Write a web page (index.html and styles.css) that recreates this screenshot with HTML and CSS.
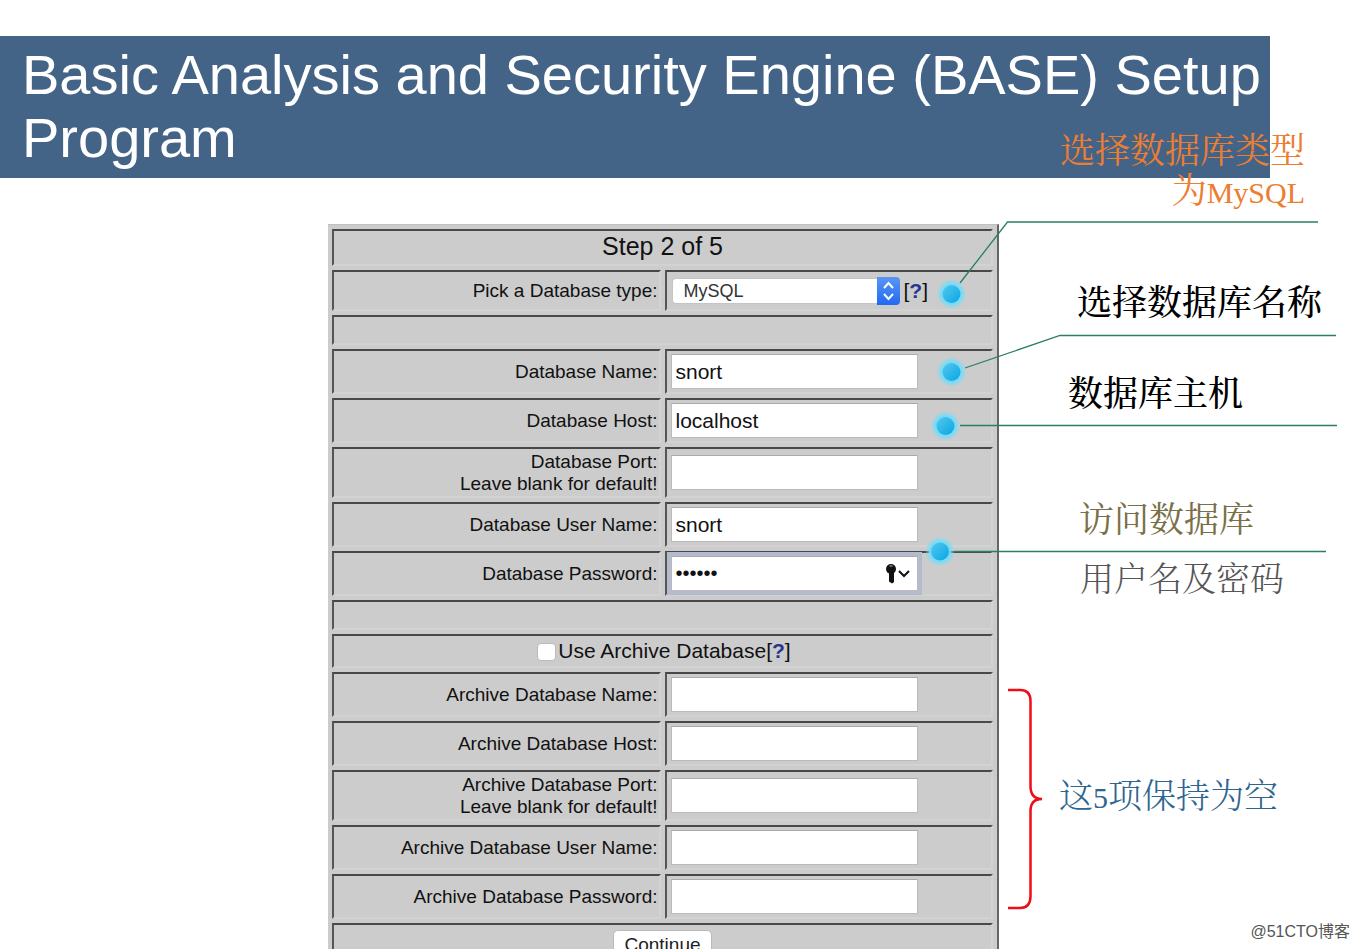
FILE: index.html
```html
<!DOCTYPE html>
<html lang="zh-CN">
<head>
<meta charset="utf-8">
<title>BASE Setup Program</title>
<link rel="stylesheet" href="styles.css">
</head>
<body>
<main class="slide">
  <h1 class="banner">Basic Analysis and Security Engine (BASE) Setup Program</h1>
  <form class="panel">
    <table class="setup">
      <tr class="row-title"><th colspan="2">Step 2 of 5</th></tr>
      <tr class="row-type">
        <td class="label"><label for="dbtype">Pick a Database type:</label></td>
        <td class="field"><div class="picker">
          <select id="dbtype" class="select"><option>MySQL</option></select>
          <svg class="stepper" viewBox="0 0 23 28"><defs><linearGradient id="blue" x2="0" y2="1"><stop offset="0" stop-color="#5a96f4"/><stop offset="1" stop-color="#2268f2"/></linearGradient></defs><path d="M0 0H19Q23 0 23 4V24Q23 28 19 28H0Z" fill="url(#blue)"/><path d="M7 11l4.500-5 4.500 5M7 17l4.500 5 4.500-5" fill="none" stroke="#fff" stroke-width="2"/></svg>
          <span>[<a class="help" href="#type">?</a>]</span>
        </div></td>
      </tr>
      <tr class="row-gap"><td colspan="2"></td></tr>
      <tr class="row-input"><td class="label"><label for="name">Database Name:</label></td><td class="field"><input class="text" id="name" type="text" value="snort"></td></tr>
      <tr class="row-input"><td class="label"><label for="host">Database Host:</label></td><td class="field"><input class="text" id="host" type="text" value="localhost"></td></tr>
      <tr class="row-double"><td class="label"><label for="port">Database Port:<br>Leave blank for default!</label></td><td class="field"><input class="text" id="port" type="text"></td></tr>
      <tr class="row-input"><td class="label"><label for="user">Database User Name:</label></td><td class="field"><input class="text" id="user" type="text" value="snort"></td></tr>
      <tr class="row-input"><td class="label"><label for="pass">Database Password:</label></td><td class="field"><div class="secret"><input class="text focused" id="pass" type="password" value="secret"><svg class="key" viewBox="0 0 28 22"><circle cx="6" cy="6" r="5"/><path d="M4 10h5v9l-2 1.500-3-2z"/><path d="M4.500 3h3" stroke="#bbb"/><path d="M14 8l5 5 5-5" fill="none" stroke="#111" stroke-width="2"/></svg></div></td></tr>
      <tr class="row-gap"><td colspan="2"></td></tr>
      <tr class="row-archive"><td colspan="2"><div class="archive"><input class="check" type="checkbox" id="archive"><label for="archive">Use Archive Database</label><span>[<a class="help" href="#archive">?</a>]</span></div></td></tr>
      <tr class="row-input"><td class="label"><label for="aname">Archive Database Name:</label></td><td class="field"><input class="text" id="aname" type="text"></td></tr>
      <tr class="row-input"><td class="label"><label for="ahost">Archive Database Host:</label></td><td class="field"><input class="text" id="ahost" type="text"></td></tr>
      <tr class="row-double"><td class="label"><label for="aport">Archive Database Port:<br>Leave blank for default!</label></td><td class="field"><input class="text" id="aport" type="text"></td></tr>
      <tr class="row-input"><td class="label"><label for="auser">Archive Database User Name:</label></td><td class="field"><input class="text" id="auser" type="text"></td></tr>
      <tr class="row-input"><td class="label"><label for="apass">Archive Database Password:</label></td><td class="field"><input class="text" id="apass" type="password"></td></tr>
      <tr class="row-submit"><td colspan="2"><button class="submit" type="button">Continue</button></td></tr>
    </table>
  </form>

  <svg class="callouts" width="1359" height="949" viewBox="0 0 1359 949">
    <defs>
      <radialGradient id="halo"><stop offset=".65" stop-color="#74dcf8"/><stop offset="1" stop-color="#74dcf8" stop-opacity="0"/></radialGradient>
      <linearGradient id="ball" x2="1" y2="1"><stop offset="0" stop-color="#54c8ee"/><stop offset="1" stop-color="#08a6e4"/></linearGradient>
    </defs>
    <g fill="none" stroke="#2b7d64" stroke-width="1.300">
      <path d="M960 283L1007.500 222H1318"/>
      <path d="M965 368L1060 335.500H1336"/>
      <path d="M960 425.500H1337"/>
      <path d="M954 551.500H1326"/>
    </g>
    <g fill="url(#halo)"><circle cx="951.500" cy="294" r="15"/><circle cx="951.500" cy="372" r="15"/><circle cx="945.500" cy="426" r="15"/><circle cx="940" cy="551.500" r="15"/></g>
    <g fill="url(#ball)"><circle cx="951.500" cy="294" r="9"/><circle cx="951.500" cy="372" r="9"/><circle cx="945.500" cy="426" r="9"/><circle cx="940" cy="551.500" r="9"/></g>
    <path d="M1008 690H1020Q1030.500 690 1030.500 701V786Q1030.500 799 1042 799Q1030.500 799 1030.500 811V896Q1030.500 908 1020 908H1008" fill="none" stroke="#f00c18" stroke-width="2.500"/>
  </svg>
  <p class="note note-type">选择数据库类型<br>为<span class="latin">MySQL</span></p>
  <p class="note note-name">选择数据库名称</p>
  <p class="note note-host">数据库主机</p>
  <p class="note note-access">访问数据库</p>
  <p class="note note-login">用户名及密码</p>
  <p class="note note-blank">这<span class="latin">5</span>项保持为空</p>
  <p class="watermark">@51CTO博客</p>
</main>
</body>
</html>
```
FILE: styles.css
```css
* { box-sizing: border-box; }
body { margin: 0; background: #fff; color: #111; font-family: "Liberation Sans", Arial, "Noto Sans CJK SC", sans-serif; }
.slide { position: relative; height: 100vh; padding-top: 36px; overflow: hidden; }
.banner { margin: 0 89px 46px 0; padding: 7px 0 9px 22px; background: #436487; color: #fff; font-size: 56px; line-height: 63px; font-weight: 400; }
.panel { margin-left: 328px; max-width: 671px; }
.setup { width: 100%; table-layout: fixed; border-collapse: separate; border-spacing: 4px; background: #ccc; border-top: 1px solid #c0c0c0; border-right: 2px solid #666; font-size: 19px; line-height: 22px; }
.setup th, .setup td { padding: 0; border: 2px solid; border-color: #484848 #d2d2d2 #d2d2d2 #555; }
.setup th { padding-bottom: 4px; font-size: 25px; font-weight: 400; }
.row-title { height: 37px; }
.row-type { height: 41px; }
.row-gap { height: 30px; }
.row-input { height: 45px; }
.row-double { height: 51px; }
.row-archive { height: 34px; }
.row-submit { height: 45px; }
.setup .label { padding-right: 1px; text-align: right; }
.setup .field { padding-left: 4px; }
.text { display: block; width: 247px; max-width: 100%; height: 35px; padding: 0 4px; border: 1px solid #bbb; border-top-color: #aaa; background: #fff; color: #111; font: 21px "Liberation Sans", Arial, sans-serif; outline: 0; }
.focused { box-shadow: 0 0 0 4px #b4bbcd; }
.secret { position: relative; width: 247px; }
.secret .text { font-size: 20px; }
.key { position: absolute; right: 5px; top: 7px; width: 28px; height: 22px; fill: #111; }
.picker { display: flex; align-items: center; font-size: 21px; }
.select { appearance: none; width: 205px; height: 26px; margin-left: 1px; padding: 0 11px; border: 1px solid #c4c4c4; border-right: 0; border-radius: 4px 0 0 4px; background: #fff; color: #333; font: 18px "Liberation Sans", Arial, sans-serif; }
.stepper { width: 23px; height: 28px; margin-right: 4px; }
.help { color: #2b3590; font-weight: 700; text-decoration: none; }
.archive { display: flex; align-items: center; justify-content: center; padding-left: 3px; font-size: 21px; }
.check { appearance: none; width: 19px; height: 18px; margin: 2px 2px 0 0; border: 1px solid #bbb; border-radius: 4px; background: #fff; }
.row-submit td { text-align: center; vertical-align: top; }
.setup .row-submit td { padding-top: 5px; }
.submit { height: 30px; padding: 0 10px; border: 1px solid #bbb; border-radius: 5px; background: #fff; color: #222; font: 19px "Liberation Sans", Arial, sans-serif; }
.callouts { position: absolute; left: 0; top: 0; pointer-events: none; }
.note { position: absolute; margin: 0; font-family: "Noto Serif CJK SC", "Noto Sans CJK SC", sans-serif; font-size: 35px; line-height: 40px; font-weight: 300; white-space: nowrap; }
.latin { font-family: "Liberation Serif", serif; font-size: 30px; }
.note-type { left: 1060px; top: 128px; color: #ed7d31; font-weight: 400; text-align: right; }
.note-name { left: 1077px; top: 280px; color: #000; font-weight: 500; }
.note-host { left: 1068px; top: 371px; color: #000; font-weight: 500; }
.note-access { left: 1079px; top: 497px; color: #7a7048; font-weight: 400; }
.note-login { left: 1080px; top: 557px; color: #555; font-size: 34px; }
.note-blank { left: 1059px; top: 774px; color: #2f6690; font-size: 34px; }
.watermark { position: absolute; right: 9px; bottom: 6px; margin: 0; color: #555; font-size: 16px; line-height: 22px; }
```
